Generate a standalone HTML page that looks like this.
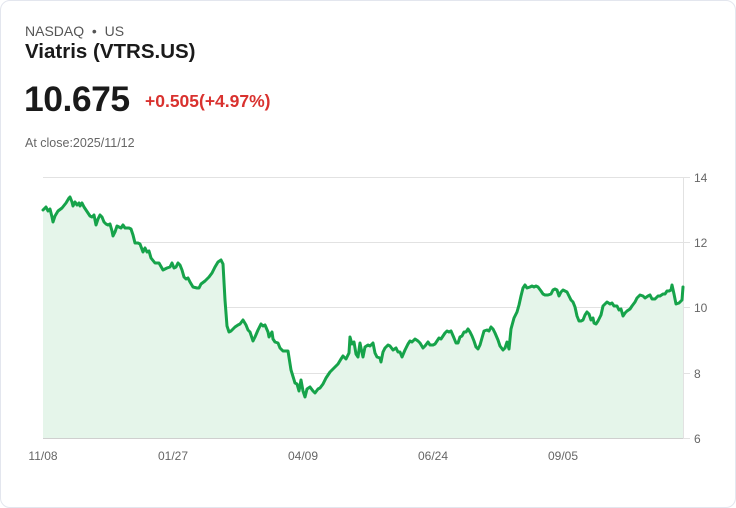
<!DOCTYPE html>
<html><head><meta charset="utf-8"><style>
html,body{margin:0;padding:0;background:#fff;}
body{width:736px;height:508px;position:relative;overflow:hidden;font-family:"Liberation Sans",sans-serif;}
.card{position:absolute;left:0;top:0;width:734px;height:506px;border:1px solid #e3e6ee;border-radius:10px;}
.t{position:absolute;white-space:nowrap;}
</style></head><body>
<div class="card"></div>
<div class="t" style="left:25px;top:23px;font-size:14px;color:#555;">NASDAQ &nbsp;•&nbsp; US</div>
<div class="t" style="left:25px;top:40px;font-size:20.5px;font-weight:bold;color:#1a1a1a;">Viatris (VTRS.US)</div>
<div class="t" style="left:24px;top:79px;font-size:35.5px;font-weight:bold;color:#1a1a1a;letter-spacing:-0.5px;">10.675</div>
<div class="t" style="left:145px;top:91px;font-size:17.5px;font-weight:bold;color:#d9322f;">+0.505(+4.97%)</div>
<div class="t" style="left:25px;top:136px;font-size:12.5px;color:#666;">At close:2025/11/12</div>
<svg width="736" height="508" style="position:absolute;left:0;top:0" font-family="Liberation Sans Narrow, Liberation Sans, sans-serif">
<g stroke="#e2e2e2" stroke-width="1">
<line x1="43" y1="177.5" x2="683" y2="177.5"/><line x1="43" y1="242.5" x2="683" y2="242.5"/><line x1="43" y1="307.5" x2="683" y2="307.5"/><line x1="43" y1="373.5" x2="683" y2="373.5"/>
<line x1="683.5" y1="177" x2="683.5" y2="438"/>
<line x1="683" y1="177.5" x2="690" y2="177.5"/><line x1="683" y1="242.5" x2="690" y2="242.5"/><line x1="683" y1="307.5" x2="690" y2="307.5"/><line x1="683" y1="373.5" x2="690" y2="373.5"/><line x1="683" y1="438.5" x2="690" y2="438.5"/>
</g>
<path fill="#e5f5ea" stroke="none" d="M43,438 L43,210 L46,207 L48,211 L50,209 L52,217 L53,222 L55,216 L58,211 L62,208 L66,203 L69,198 L70,197 L72,202 L73,206 L75,202 L77,205 L79,203 L80,206 L82,203 L84,207 L86,210 L88,213 L90,216 L92,217 L94,215 L96,225 L98,219 L100,215 L102,217 L104,222 L106,224 L108,225 L110,224 L112,231 L113,236 L115,232 L117,226 L119,227 L121,228 L123,225 L125,228 L127,228 L129,228 L131,229 L133,235 L135,243 L138,243 L140,244 L143,252 L145,248 L147,252 L149,251 L151,258 L155,263 L159,263 L163,270 L167,268 L170,267 L172,263 L174,268 L176,267 L178,263 L180,265 L182,270 L184,277 L186,279 L188,278 L190,282 L193,287 L197,288 L199,288 L201,284 L205,281 L209,277 L212,273 L215,267 L218,262 L221,260 L223,264 L225,300 L227,326 L229,332 L231,331 L235,327 L238,325 L240,324 L243,320 L246,325 L248,330 L250,332 L253,341 L255,337 L258,330 L261,324 L263,326 L265,325 L268,332 L269,337 L272,332 L273,339 L275,342 L278,343 L280,348 L283,351 L285,351 L288,351 L291,370 L295,383 L297,384 L299,391 L301,380 L303,391 L305,397 L307,389 L310,387 L313,391 L315,393 L318,389 L320,388 L323,384 L326,378 L330,372 L334,368 L338,364 L341,359 L343,356 L346,359 L349,353 L350,337 L352,344 L354,342 L356,354 L358,357 L360,343 L361,348 L363,357 L365,347 L368,345 L370,346 L373,343 L375,353 L377,357 L380,358 L381,362 L383,352 L385,348 L388,345 L390,346 L393,350 L396,348 L398,352 L400,352 L402,357 L405,350 L408,344 L410,341 L412,342 L415,339 L418,341 L420,343 L423,348 L425,346 L428,342 L430,345 L433,345 L435,344 L437,341 L439,338 L441,339 L443,336 L445,333 L447,331 L449,332 L451,331 L454,338 L456,343 L458,343 L460,337 L462,336 L464,332 L466,332 L468,329 L470,332 L472,336 L474,341 L476,347 L478,349 L480,345 L484,331 L487,330 L489,331 L491,327 L493,329 L495,333 L498,340 L500,346 L503,350 L505,348 L507,342 L509,349 L511,329 L514,318 L517,312 L519,305 L521,296 L523,288 L525,285 L527,288 L530,287 L532,286 L534,287 L536,286 L538,287 L541,291 L543,294 L545,295 L548,295 L551,294 L553,290 L555,289 L557,290 L559,296 L561,292 L563,290 L565,291 L567,292 L569,296 L571,300 L573,302 L575,307 L577,316 L579,321 L581,321 L583,320 L585,315 L587,312 L589,314 L591,320 L593,318 L594,323 L596,324 L598,321 L601,315 L603,306 L605,304 L607,302 L610,304 L612,303 L614,306 L617,306 L619,310 L621,309 L623,316 L625,313 L627,311 L630,309 L632,306 L635,302 L637,298 L640,295 L643,296 L645,298 L648,296 L650,295 L652,299 L655,299 L658,296 L660,296 L663,294 L665,294 L667,291 L669,291 L671,290 L672,285 L674,294 L676,304 L679,303 L682,300 L683,287 L683,438 Z"/>
<line x1="43" y1="438.5" x2="683" y2="438.5" stroke="#cfcfcf"/>
<path fill="none" stroke="#16a34a" stroke-width="3" stroke-linejoin="round" stroke-linecap="round" d="M43,210 L46,207 L48,211 L50,209 L52,217 L53,222 L55,216 L58,211 L62,208 L66,203 L69,198 L70,197 L72,202 L73,206 L75,202 L77,205 L79,203 L80,206 L82,203 L84,207 L86,210 L88,213 L90,216 L92,217 L94,215 L96,225 L98,219 L100,215 L102,217 L104,222 L106,224 L108,225 L110,224 L112,231 L113,236 L115,232 L117,226 L119,227 L121,228 L123,225 L125,228 L127,228 L129,228 L131,229 L133,235 L135,243 L138,243 L140,244 L143,252 L145,248 L147,252 L149,251 L151,258 L155,263 L159,263 L163,270 L167,268 L170,267 L172,263 L174,268 L176,267 L178,263 L180,265 L182,270 L184,277 L186,279 L188,278 L190,282 L193,287 L197,288 L199,288 L201,284 L205,281 L209,277 L212,273 L215,267 L218,262 L221,260 L223,264 L225,300 L227,326 L229,332 L231,331 L235,327 L238,325 L240,324 L243,320 L246,325 L248,330 L250,332 L253,341 L255,337 L258,330 L261,324 L263,326 L265,325 L268,332 L269,337 L272,332 L273,339 L275,342 L278,343 L280,348 L283,351 L285,351 L288,351 L291,370 L295,383 L297,384 L299,391 L301,380 L303,391 L305,397 L307,389 L310,387 L313,391 L315,393 L318,389 L320,388 L323,384 L326,378 L330,372 L334,368 L338,364 L341,359 L343,356 L346,359 L349,353 L350,337 L352,344 L354,342 L356,354 L358,357 L360,343 L361,348 L363,357 L365,347 L368,345 L370,346 L373,343 L375,353 L377,357 L380,358 L381,362 L383,352 L385,348 L388,345 L390,346 L393,350 L396,348 L398,352 L400,352 L402,357 L405,350 L408,344 L410,341 L412,342 L415,339 L418,341 L420,343 L423,348 L425,346 L428,342 L430,345 L433,345 L435,344 L437,341 L439,338 L441,339 L443,336 L445,333 L447,331 L449,332 L451,331 L454,338 L456,343 L458,343 L460,337 L462,336 L464,332 L466,332 L468,329 L470,332 L472,336 L474,341 L476,347 L478,349 L480,345 L484,331 L487,330 L489,331 L491,327 L493,329 L495,333 L498,340 L500,346 L503,350 L505,348 L507,342 L509,349 L511,329 L514,318 L517,312 L519,305 L521,296 L523,288 L525,285 L527,288 L530,287 L532,286 L534,287 L536,286 L538,287 L541,291 L543,294 L545,295 L548,295 L551,294 L553,290 L555,289 L557,290 L559,296 L561,292 L563,290 L565,291 L567,292 L569,296 L571,300 L573,302 L575,307 L577,316 L579,321 L581,321 L583,320 L585,315 L587,312 L589,314 L591,320 L593,318 L594,323 L596,324 L598,321 L601,315 L603,306 L605,304 L607,302 L610,304 L612,303 L614,306 L617,306 L619,310 L621,309 L623,316 L625,313 L627,311 L630,309 L632,306 L635,302 L637,298 L640,295 L643,296 L645,298 L648,296 L650,295 L652,299 L655,299 L658,296 L660,296 L663,294 L665,294 L667,291 L669,291 L671,290 L672,285 L674,294 L676,304 L679,303 L682,300 L683,287"/>
<g fill="#666" font-size="12">
<text x="694" y="182">14</text><text x="694" y="247">12</text><text x="694" y="312">10</text><text x="694" y="378">8</text><text x="694" y="443">6</text>
<g text-anchor="middle"><text x="43" y="460">11/08</text><text x="173" y="460">01/27</text><text x="303" y="460">04/09</text><text x="433" y="460">06/24</text><text x="563" y="460">09/05</text></g>
</g>
</svg>
</body></html>
